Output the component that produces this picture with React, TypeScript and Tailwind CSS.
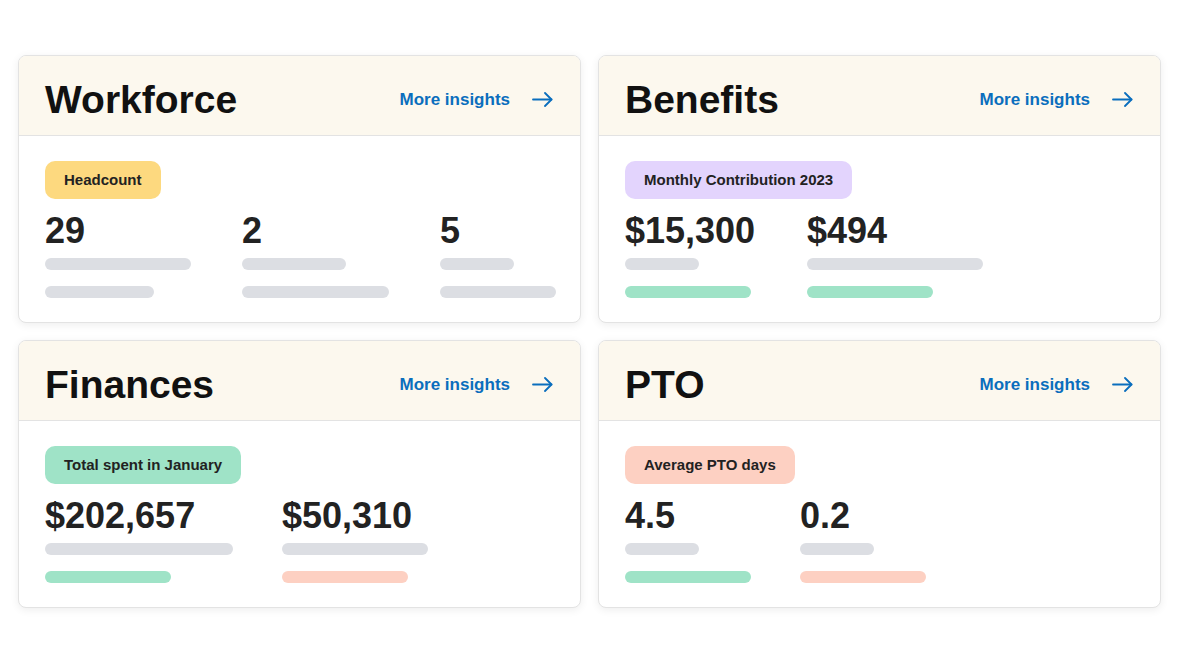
import React from 'react'

type Bar = { w: number; color: string }
type Stat = { value: string; col: number; bars: Bar[] }

interface Card {
  title: string
  badge: string
  badgeColor: string
  stats: Stat[]
}

const gray = 'bg-[#dcdee3]'
const green = 'bg-[#9fe3c7]'
const peach = 'bg-[#fdd0c2]'

// col = distance from this column's left edge to the next one
const cards: Card[] = [
  {
    title: 'Workforce',
    badge: 'Headcount',
    badgeColor: 'bg-[#fdd97f]',
    stats: [
      { value: '29', col: 197, bars: [{ w: 146, color: gray }, { w: 109, color: gray }] },
      { value: '2', col: 198, bars: [{ w: 104, color: gray }, { w: 147, color: gray }] },
      { value: '5', col: 117, bars: [{ w: 74, color: gray }, { w: 116, color: gray }] },
    ],
  },
  {
    title: 'Benefits',
    badge: 'Monthly Contribution 2023',
    badgeColor: 'bg-[#e3d4fd]',
    stats: [
      { value: '$15,300', col: 182, bars: [{ w: 74, color: gray }, { w: 126, color: green }] },
      { value: '$494', col: 177, bars: [{ w: 176, color: gray }, { w: 126, color: green }] },
    ],
  },
  {
    title: 'Finances',
    badge: 'Total spent in January',
    badgeColor: 'bg-[#9fe3c7]',
    stats: [
      { value: '$202,657', col: 237, bars: [{ w: 188, color: gray }, { w: 126, color: green }] },
      { value: '$50,310', col: 147, bars: [{ w: 146, color: gray }, { w: 126, color: peach }] },
    ],
  },
  {
    title: 'PTO',
    badge: 'Average PTO days',
    badgeColor: 'bg-[#fdd0c2]',
    stats: [
      { value: '4.5', col: 175, bars: [{ w: 74, color: gray }, { w: 126, color: green }] },
      { value: '0.2', col: 127, bars: [{ w: 74, color: gray }, { w: 126, color: peach }] },
    ],
  },
]

function Arrow() {
  return (
    <svg width="21" height="15" viewBox="0 0 21 15" fill="none" stroke="#0a6ebd" strokeWidth="1.8" strokeLinecap="round" strokeLinejoin="round">
      <path d="M1 7.5h18.5" />
      <path d="M13 1l6.5 6.5L13 14" />
    </svg>
  )
}

function InsightCard({ card }: { card: Card }) {
  return (
    <div className="overflow-hidden rounded-lg border border-[#e3e3e3] bg-white shadow-[0_2px_8px_rgba(0,0,0,0.07)]">
      <div className="flex h-[80px] items-center justify-between border-b border-[#e3e3e3] bg-[#fcf8ee] pt-[8px] pl-[26px] pr-[27px]">
        <h2 className="text-[39px] leading-none font-bold text-[#111]">{card.title}</h2>
        <a className="flex items-center gap-[22px] text-[17px] font-bold text-[#0a6ebd]" href="#">
          More insights
          <Arrow />
        </a>
      </div>
      <div className="pt-[25px] pb-[24px] pl-[26px]">
        <span className={`inline-flex h-[38px] items-center rounded-[10px] px-[19px] text-[15px] font-bold text-[#222] ${card.badgeColor}`}>
          {card.badge}
        </span>
        <div className="mt-[12px] flex">
          {card.stats.map((s, i) => (
            <div key={i} className="flex flex-col" style={{ width: s.col }}>
              <div className="text-[36px] leading-[40px] font-bold text-[#222]">{s.value}</div>
              <div className="mt-[7px] flex flex-col gap-[16px]">
                {s.bars.map((b, j) => (
                  <div key={j} className={`h-3 rounded-full ${b.color}`} style={{ width: b.w }} />
                ))}
              </div>
            </div>
          ))}
        </div>
      </div>
    </div>
  )
}

export default function App() {
  return (
    <div className="min-h-screen bg-white font-['Liberation_Sans',Arial,sans-serif]">
      <div className="mx-auto grid w-[1143px] grid-cols-2 gap-x-[17px] gap-y-[17px] pt-[55px]">
        {cards.map((c) => (
          <InsightCard key={c.title} card={c} />
        ))}
      </div>
    </div>
  )
}
